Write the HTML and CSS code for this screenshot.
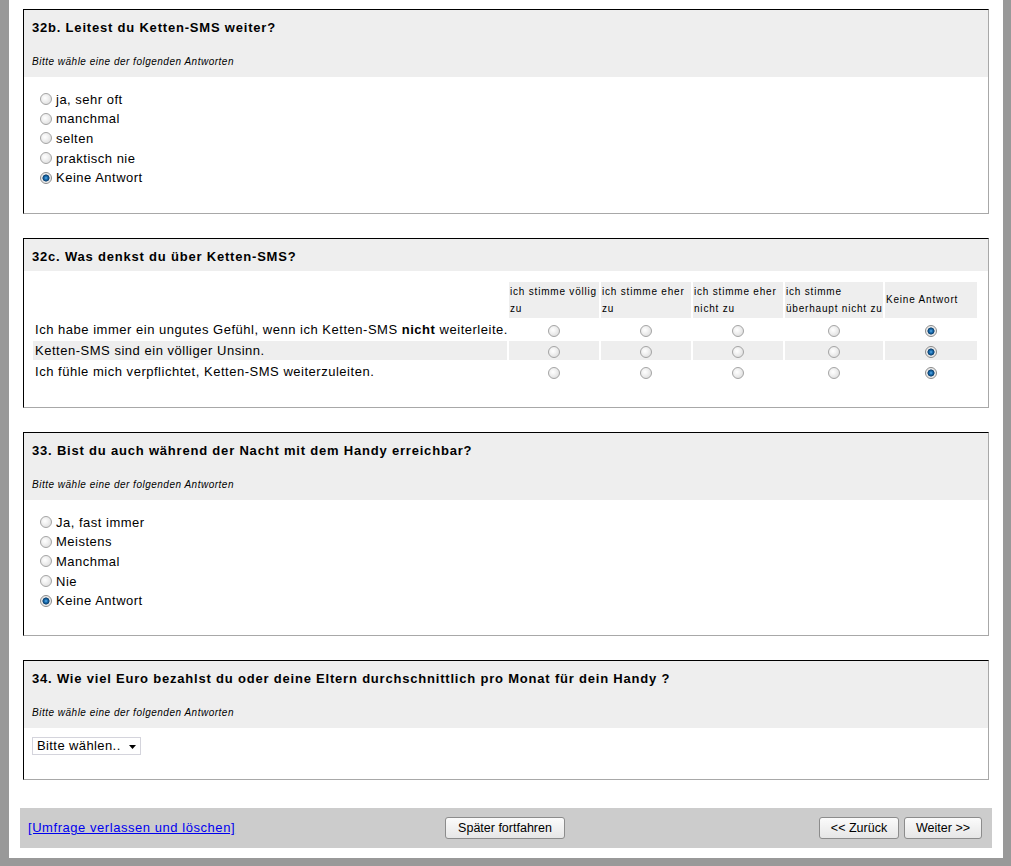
FILE: index.html
```html
<!DOCTYPE html>
<html lang="de">
<head>
<meta charset="utf-8">
<title>Umfrage</title>
<link rel="stylesheet" href="styles.css">
</head>
<body>
<div class="page">
  <div class="question">
    <div class="q-head">
      <div class="q-title">32b. Leitest du Ketten-SMS weiter?</div>
      <div class="q-help">Bitte wähle eine der folgenden Antworten</div>
    </div>
    <div class="list">
      <label class="opt"><input type="radio" class="radio" name="q32b">ja, sehr oft</label>
      <label class="opt"><input type="radio" class="radio" name="q32b">manchmal</label>
      <label class="opt"><input type="radio" class="radio" name="q32b">selten</label>
      <label class="opt"><input type="radio" class="radio" name="q32b">praktisch nie</label>
      <label class="opt"><input type="radio" class="radio" name="q32b" checked>Keine Antwort</label>
    </div>
  </div>

  <div class="question">
    <div class="q-head compact">
      <div class="q-title">32c. Was denkst du über Ketten-SMS?</div>
    </div>
    <div class="matrix-body">
      <table class="matrix">
        <colgroup>
          <col class="c-label"><col class="c-90"><col class="c-90"><col class="c-90"><col class="c-98"><col class="c-92">
        </colgroup>
        <thead>
          <tr>
            <th class="blank"></th>
            <th>ich stimme völlig<br>zu</th>
            <th>ich stimme eher<br>zu</th>
            <th>ich stimme eher<br>nicht zu</th>
            <th>ich stimme<br>überhaupt nicht zu</th>
            <th>Keine Antwort</th>
          </tr>
        </thead>
        <tbody>
          <tr>
            <td class="label">Ich habe immer ein ungutes Gefühl, wenn ich Ketten-SMS <b>nicht</b> weiterleite.</td>
            <td class="r"><input type="radio" class="radio" name="m1"></td>
            <td class="r"><input type="radio" class="radio" name="m1"></td>
            <td class="r"><input type="radio" class="radio" name="m1"></td>
            <td class="r"><input type="radio" class="radio" name="m1"></td>
            <td class="r"><input type="radio" class="radio" name="m1" checked></td>
          </tr>
          <tr class="alt">
            <td class="label">Ketten-SMS sind ein völliger Unsinn.</td>
            <td class="r"><input type="radio" class="radio" name="m2"></td>
            <td class="r"><input type="radio" class="radio" name="m2"></td>
            <td class="r"><input type="radio" class="radio" name="m2"></td>
            <td class="r"><input type="radio" class="radio" name="m2"></td>
            <td class="r"><input type="radio" class="radio" name="m2" checked></td>
          </tr>
          <tr>
            <td class="label">Ich fühle mich verpflichtet, Ketten-SMS weiterzuleiten.</td>
            <td class="r"><input type="radio" class="radio" name="m3"></td>
            <td class="r"><input type="radio" class="radio" name="m3"></td>
            <td class="r"><input type="radio" class="radio" name="m3"></td>
            <td class="r"><input type="radio" class="radio" name="m3"></td>
            <td class="r"><input type="radio" class="radio" name="m3" checked></td>
          </tr>
        </tbody>
      </table>
    </div>
  </div>

  <div class="question q33">
    <div class="q-head">
      <div class="q-title">33. Bist du auch während der Nacht mit dem Handy erreichbar?</div>
      <div class="q-help">Bitte wähle eine der folgenden Antworten</div>
    </div>
    <div class="list">
      <label class="opt"><input type="radio" class="radio" name="q33">Ja, fast immer</label>
      <label class="opt"><input type="radio" class="radio" name="q33">Meistens</label>
      <label class="opt"><input type="radio" class="radio" name="q33">Manchmal</label>
      <label class="opt"><input type="radio" class="radio" name="q33">Nie</label>
      <label class="opt"><input type="radio" class="radio" name="q33" checked>Keine Antwort</label>
    </div>
  </div>

  <div class="question last">
    <div class="q-head">
      <div class="q-title">34. Wie viel Euro bezahlst du oder deine Eltern durchschnittlich pro Monat für dein Handy ?</div>
      <div class="q-help">Bitte wähle eine der folgenden Antworten</div>
    </div>
    <div class="select-body">
      <span class="select-wrap">
        <select class="select">
          <option>Bitte wählen..</option>
        </select>
        <svg class="select-arrow" width="7" height="4" viewBox="0 0 7 4"><path d="M0 0H7L3.5 4Z" fill="#000"/></svg>
      </span>
    </div>
  </div>

  <div class="footer">
    <div class="f-left"><a href="#" class="exit">[Umfrage verlassen und löschen]</a></div>
    <div class="f-center"><button class="btn btn-later">Später fortfahren</button></div>
    <div class="f-right">
      <button class="btn btn-back">&lt;&lt; Zurück</button>
      <button class="btn btn-next">Weiter &gt;&gt;</button>
    </div>
  </div>
</div>
</body>
</html>
```

FILE: styles.css
```css
html, body {
  margin: 0;
}

body {
  background: #999999;
  padding: 0 8px 8px 9px;
  font-family: "Liberation Sans", Arial, sans-serif;
  font-size: 13px;
  color: #000;
}

.page {
  background: #fff;
  padding: 9px 14px 10px;
}

.question {
  border: 1px solid;
  border-color: #000 #a8a8a8 #a8a8a8 #000;
  margin-bottom: 24px;
}

.question.last {
  margin-bottom: 28px;
}

.q-head {
  background: #eeeeee;
  padding: 10px 8px 9px;
}

.q-head.compact {
  padding: 10px 8px 6px;
}

.q-title {
  font-weight: bold;
  line-height: 16px;
  letter-spacing: 0.8px;
}

.q-help {
  margin-top: 20px;
  font-size: 10px;
  line-height: 12px;
  font-style: italic;
  letter-spacing: 0.5px;
}

.list {
  padding: 12.5px 16px 25.5px;
}

.q33 .list {
  padding-bottom: 24.5px;
}

.opt {
  display: flex;
  align-items: center;
  height: 19.6px;
  letter-spacing: 0.5px;
}

.radio {
  appearance: none;
  -webkit-appearance: none;
  width: 12px;
  height: 12px;
  margin: 0 4px 0 0;
  border-radius: 50%;
  border: 1px solid #a4a4a4;
  background: radial-gradient(circle at 40% 40%, #ffffff 0, #f2f2f2 35%, #d6d6d6 100%);
  flex: none;
}

.radio:checked {
  border-color: #8a8a8a;
  background: radial-gradient(circle at 50% 50%, #5fb0ec 0, #1b6eb0 1.6px, #0b3e6c 3.2px, #e0e0e0 3.8px, #f4f4f4 5px);
}

.matrix-body {
  padding: 9px 8px 24px 7px;
}

.matrix {
  table-layout: fixed;
  width: 948px;
  border-collapse: separate;
  border-spacing: 2px;
}

.c-label { width: 474px; }
.c-90 { width: 90px; }
.c-98 { width: 98px; }
.c-92 { width: 92px; }

.matrix th {
  background: #eeeeee;
  font-weight: normal;
  font-size: 10px;
  line-height: 17px;
  letter-spacing: 0.8px;
  text-align: left;
  vertical-align: middle;
  padding: 1px 1px;
  white-space: nowrap;
  height: 34px;
}

.matrix th.blank {
  background: transparent;
}

.matrix td {
  height: 19px;
  padding: 0;
  vertical-align: middle;
}

.matrix td.label {
  padding-left: 2px;
  letter-spacing: 0.52px;
  white-space: nowrap;
}

.matrix td.r {
  text-align: center;
}

.matrix td.r .radio {
  display: inline-block;
  margin: 0;
  vertical-align: middle;
}

.matrix tr.alt td {
  background: #eeeeee;
}

.select-body {
  padding: 9px 8px 24px;
}

.select-wrap {
  position: relative;
  display: inline-block;
  vertical-align: top;
}

.select {
  appearance: none;
  -webkit-appearance: none;
  display: block;
  width: 109px;
  height: 18px;
  margin: 0;
  padding: 0 0 0 4px;
  border: 1px solid #d4d4dc;
  border-radius: 0;
  background: #fff;
  font-family: "Liberation Sans", Arial, sans-serif;
  font-size: 13px;
  letter-spacing: 0.4px;
  color: #000;
}

.select-arrow {
  position: absolute;
  right: 5px;
  top: 8px;
  pointer-events: none;
}

.footer {
  margin: 0 -3px;
  height: 40px;
  background: #cccccc;
  padding: 0 10px 0 8px;
  display: grid;
  grid-template-columns: 1fr auto 1fr;
  align-items: center;
}

.exit {
  color: #0000ee;
  text-decoration: underline;
  letter-spacing: 0.55px;
}

.f-center {
  display: flex;
  justify-content: center;
}

.f-right {
  display: flex;
  justify-content: flex-end;
  gap: 5px;
}

.btn {
  height: 22px;
  padding: 0;
  border: 1px solid #8c8c8c;
  border-radius: 3px;
  background: linear-gradient(#fbfbfb, #e6e6e6);
  font-family: "Liberation Sans", Arial, sans-serif;
  font-size: 12.5px;
  color: #000;
}

.btn-later { width: 120px; }
.btn-back { width: 80px; }
.btn-next { width: 78px; }
```
